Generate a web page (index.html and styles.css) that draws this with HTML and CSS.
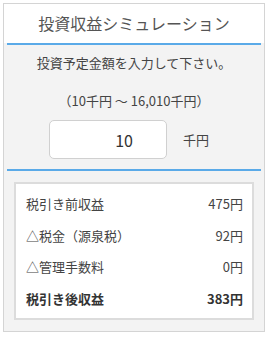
FILE: index.html
```html
<!DOCTYPE html>
<html lang="ja">
<head>
    <meta charset="UTF-8">
    <meta name="viewport" content="width=device-width, initial-scale=1.0">
    <title>投資収益シミュレーション</title>
    <link rel="stylesheet" href="styles.css">
</head>
<body>

    <!-- シミュレーション -->
    <div class="sim">
        <div class="sim-title">投資収益シミュレーション</div>
        <div class="sim-input">
            <p class="guide">投資予定金額を入力して下さい。</p>
            <p class="range">（10千円 ～ 16,010千円）</p>
            <div class="amount-row">
                <input type="text" class="amount" value="10">
                <span class="unit">千円</span>
            </div>
        </div>
        <div class="sim-result">
            <div class="result">
                <div class="row"><span>税引き前収益</span><span>475円</span></div>
                <div class="row"><span>△税金（源泉税）</span><span>92円</span></div>
                <div class="row"><span>△管理手数料</span><span>0円</span></div>
                <div class="row total"><span>税引き後収益</span><span>383円</span></div>
            </div>
        </div>
    </div>

</body>
</html>
```

FILE: styles.css
```css
body {
    margin: 0;
    padding: 3px 4px 0 3px;
    font-family: "Noto Sans CJK JP", "Noto Sans", sans-serif;
    color: #444;
    background: #fff;
}
.sim {
    border: 1px solid #d4d4d4;
    background: #f3f3f3;
}
.sim-title {
    background: #fff;
    height: 39px;
    line-height: 39px;
    text-align: center;
    font-size: 16px;
    color: #555;
}
.sim-input {
    border-top: 2px solid #5aaae8;
    border-bottom: 2px solid #5aaae8;
    margin: 0 3px;
    padding: 8px 0 10px;
    text-align: center;
    font-size: 13px;
}
.guide,
.range {
    margin: 0;
    line-height: 20px;
}
.range {
    margin-top: 18px;
}
.amount-row {
    margin-top: 9px;
    display: flex;
    justify-content: center;
    align-items: center;
    padding-left: 4px;
}
.amount {
    box-sizing: border-box;
    width: 118px;
    height: 39px;
    border: 1px solid #d0d0d0;
    border-radius: 5px;
    background: #fff;
    text-align: right;
    padding: 0 33px 0 0;
    font-family: inherit;
    font-size: 16px;
    color: #333;
}
.unit {
    margin-left: 16px;
    width: 40px;
    text-align: left;
}
.sim-result {
    padding: 11px 10px 11px;
}
.result {
    background: #fff;
    border: 2px solid #dcdcdc;
    padding: 4px 0;
    font-size: 13px;
}
.row {
    display: flex;
    justify-content: space-between;
    align-items: center;
    height: 31.5px;
    padding: 0 9px 0 10px;
}
.row.total {
    font-weight: bold;
    color: #333;
}
```
